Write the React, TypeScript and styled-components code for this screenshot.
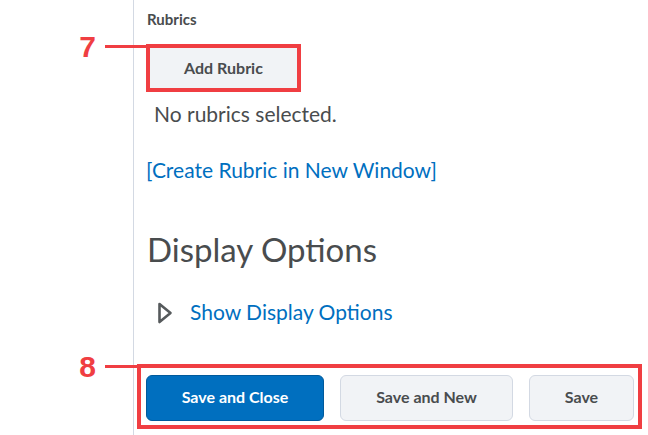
import React from 'react'
import styled, { createGlobalStyle } from 'styled-components'

const GlobalStyle = createGlobalStyle`
  html, body {
    margin: 0;
    padding: 0;
    background: #ffffff;
  }
  body {
    font-family: Lato, 'Noto Sans', sans-serif;
    color: #494c4e;
  }
`

const Page = styled.div`
  display: flex;
  width: 648px;
  height: 435px;
  overflow: hidden;
`

const Gutter = styled.div`
  width: 133px;
  flex-shrink: 0;
`

const Content = styled.div`
  flex: 1;
  border-left: 1px solid #d3d9e3;
  padding: 9px 0 0 12px;
  display: flex;
  flex-direction: column;
  align-items: flex-start;
`

const Label = styled.div`
  font-size: 15px;
  font-weight: 700;
  line-height: 20px;
  margin-left: 1px;
`

const Callout = styled.div<{ $gap?: number }>`
  position: relative;
  border: 4px solid #f03e42;
  margin-top: ${({ $gap }) => $gap ?? 0}px;
`

const Leader = styled.div<{ $length: number }>`
  position: absolute;
  top: -3px;
  left: -${({ $length }) => $length + 4}px;
  width: ${({ $length }) => $length}px;
  height: 3px;
  background: #f03e42;
`

const Marker = styled.div`
  position: absolute;
  right: calc(100% + 9px);
  top: 50%;
  transform: translateY(-50%);
  font-family: 'Liberation Sans', Arial, sans-serif;
  font-weight: 700;
  font-size: 30px;
  line-height: 30px;
  color: #f03e42;
`

const Button = styled.button<{ $primary?: boolean; $width: number }>`
  width: ${({ $width }) => $width}px;
  height: 46px;
  border-radius: 6px;
  border: 1px solid ${({ $primary }) => ($primary ? '#005a9c' : '#d3d9e3')};
  background: ${({ $primary }) => ($primary ? '#006fbf' : '#f1f3f6')};
  color: ${({ $primary }) => ($primary ? '#ffffff' : '#494c4e')};
  font-family: Lato, 'Noto Sans', sans-serif;
  font-weight: 700;
  font-size: 16px;
  padding: 0 0 4px;
`

const AddButton = styled(Button)`
  height: 40px;
  border-radius: 0;
  border: none;
  padding-bottom: 2px;
`

const Note = styled.div`
  font-size: 21px;
  line-height: 24px;
  margin: 10px 0 0 8px;
`

const Link = styled.a<{ $gap: number }>`
  font-size: 21px;
  line-height: 24px;
  color: #006fbf;
  text-decoration: none;
  margin-top: ${({ $gap }) => $gap}px;
`

const Heading = styled.h2`
  font-size: 33px;
  font-weight: 400;
  line-height: 40px;
  margin: 47px 0 0 1px;
`

const Toggle = styled.div`
  display: flex;
  align-items: center;
  gap: 17px;
  margin: 30px 0 0 11px;

  svg {
    margin-top: 3px;
  }
`

const FooterSlot = styled.div`
  margin: 40px 0 0 -9px;
`

const Footer = styled.div`
  display: flex;
  gap: 16px;
  padding: 7px 4px 4px 5px;
`

const Annotated = ({ n, length, gap, children }: { n: number; length: number; gap?: number; children: React.ReactNode }) => (
  <Callout $gap={gap}>
    <Leader $length={length}>
      <Marker>{n}</Marker>
    </Leader>
    {children}
  </Callout>
)

export default function App() {
  return (
    <Page>
      <GlobalStyle />
      <Gutter />
      <Content>
        <Label>Rubrics</Label>
        <Annotated n={7} length={41} gap={15}>
          <AddButton $width={147}>Add Rubric</AddButton>
        </Annotated>
        <Note>No rubrics selected.</Note>
        <Link href="#" $gap={32}>[Create Rubric in New Window]</Link>
        <Heading>Display Options</Heading>
        <Toggle>
          <svg width="16" height="22" viewBox="0 0 16 22">
            <path d="M2.5 2 L13.5 11 L2.5 20 Z" fill="none" stroke="#565a5c" strokeWidth="2.6" strokeLinejoin="round" />
          </svg>
          <Link href="#" $gap={0}>Show Display Options</Link>
        </Toggle>
        <FooterSlot>
          <Annotated n={8} length={32}>
            <Footer>
              <Button $primary $width={178}>Save and Close</Button>
              <Button $width={173}>Save and New</Button>
              <Button $width={105}>Save</Button>
            </Footer>
          </Annotated>
        </FooterSlot>
      </Content>
    </Page>
  )
}
